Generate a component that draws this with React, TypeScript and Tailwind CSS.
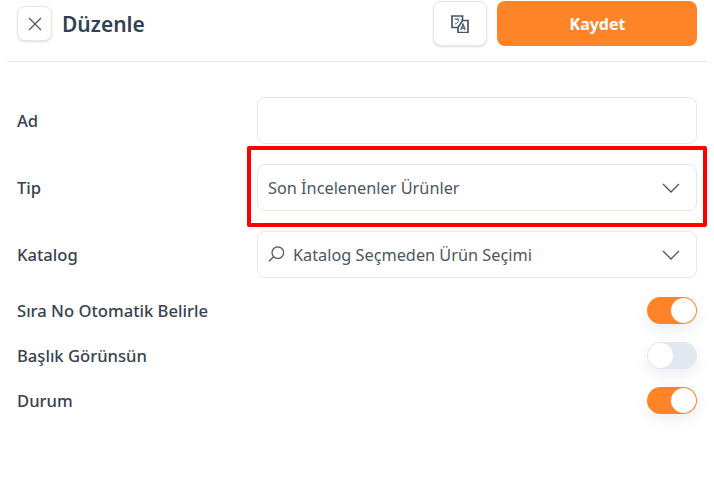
import React from "react";

const font = { fontFamily: '"Noto Sans", sans-serif' };

function Chevron() {
  return (
    <svg width="18" height="10" viewBox="0 0 18 10" fill="none" stroke="#4b5563" strokeWidth="1.3" className="shrink-0">
      <path d="M1 1l8 8 8-8" />
    </svg>
  );
}

function Toggle({ on }: { on: boolean }) {
  return (
    <div className={`h-[27px] w-[50px] rounded-full flex items-center p-[1px] shadow-[0_6px_14px_rgba(100,116,139,0.12)] ${on ? "bg-[#ff8427] justify-end" : "bg-[#e2e8f0] justify-start"}`}>
      <div className="h-[25px] w-[25px] rounded-full bg-white" />
    </div>
  );
}

function Row({ label, children }: { label: string; children: React.ReactNode }) {
  return (
    <div className="flex items-center">
      <div className="w-[240px] text-[16.6px] leading-[24px] pt-[1px] font-medium text-[#374151] shrink-0">{label}</div>
      <div className="flex-1">{children}</div>
    </div>
  );
}

function Field({ children }: { children?: React.ReactNode }) {
  return (
    <div className="h-[47px] rounded-lg border border-[#e5e7eb] bg-white flex items-center justify-between pl-[10px] pr-[16px] text-[16.3px] leading-[24px] text-[#4b5563]">
      {children}
    </div>
  );
}

function SwitchRow({ label, on }: { label: string; on: boolean }) {
  return (
    <div className="flex items-center justify-between h-[27px]">
      <span className="text-[16.6px] leading-[24px] pt-[1px] font-medium text-[#374151]">{label}</span>
      <Toggle on={on} />
    </div>
  );
}

export default function App() {
  return (
    <div className="relative w-[714px] h-[493px] bg-white overflow-hidden" style={font}>
      <header className="mx-[7px] h-[62px] border-b border-[#e5e7eb] flex items-start justify-between pl-[10px] pr-[10px] pt-[1px]">
        <div className="flex items-center gap-[10px] mt-[5px]">
          <button className="w-[35px] h-[35px] rounded-lg border border-[#e5e7eb] bg-white shadow-sm flex items-center justify-center">
            <svg width="14" height="14" viewBox="0 0 14 14" fill="none" stroke="#4b5563" strokeWidth="1.2">
              <path d="M1 1l12 12M13 1L1 13" />
            </svg>
          </button>
          <h1 className="text-[21px] leading-[28px] pt-[1px] font-semibold text-[#334155]">Düzenle</h1>
        </div>
        <div className="flex gap-[10px]">
          <button className="w-[54px] h-[45px] rounded-lg border border-[#e5e7eb] bg-white shadow-sm flex items-center justify-center">
            <svg width="18" height="18" viewBox="0 0 18 18" fill="none" stroke="#475569" strokeWidth="1.7">
              <path d="M7 12.5H1V1h10.5v5" />
              <path d="M11.5 5.5H17v12H7v-5z" />
              <path d="M3.5 4H8M5.7 4v1M4 9c2 0 3-2 3.5-4" strokeWidth="1" />
              <path d="M9.8 15l2.2-6 2.2 6M10.6 13.2h2.8" strokeWidth="1.2" />
            </svg>
          </button>
          <button className="w-[200px] h-[45px] rounded-lg bg-[#ff8427] text-white text-[16px] font-bold pl-[1px]">Kaydet</button>
        </div>
      </header>

      <main className="px-[17px] pt-[35px]">
        <div className="flex flex-col gap-[20px]">
          <Row label="Ad"><Field /></Row>
          <Row label="Tip">
            <Field>
              <span>Son İncelenenler Ürünler</span>
              <Chevron />
            </Field>
          </Row>
          <Row label="Katalog">
            <Field>
              <span className="flex items-center gap-[8px]">
                <svg width="17" height="17" viewBox="0 0 17 17" fill="none" stroke="#4b5563" strokeWidth="1.2">
                  <circle cx="9.8" cy="6.6" r="5.8" />
                  <path d="M5.6 10.8L1 15.2" />
                </svg>
                Katalog Seçmeden Ürün Seçimi
              </span>
              <Chevron />
            </Field>
          </Row>
        </div>
        <div className="flex flex-col gap-[18px] mt-[19px]">
          <SwitchRow label="Sıra No Otomatik Belirle" on />
          <SwitchRow label="Başlık Görünsün" on={false} />
          <SwitchRow label="Durum" on />
        </div>
      </main>

      <div className="absolute left-[247px] top-[146px] w-[460px] h-[81px] border-[4px] border-[#ff0000] rounded-[2px] pointer-events-none" />
    </div>
  );
}
